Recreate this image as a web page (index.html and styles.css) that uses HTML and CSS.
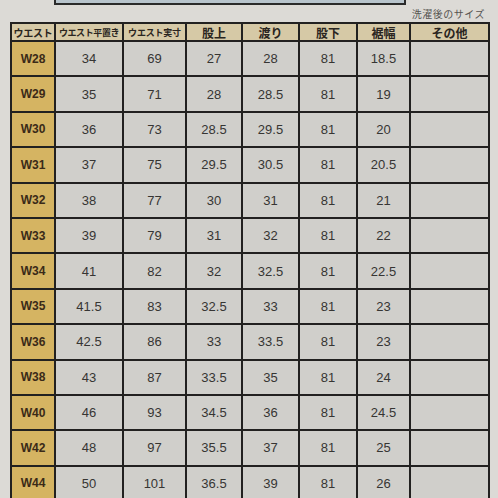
FILE: index.html
```html
<!DOCTYPE html>
<html lang="ja">
<head>
<meta charset="utf-8">
<link rel="stylesheet" href="styles.css">
</head>
<body>
<div class="page">
  <div class="topbox"></div>
  <div class="caption">洗濯後のサイズ</div>
  <div class="chart">
    <div class="hd h1">ウエスト</div>
    <div class="hd h2">ウエスト平置き</div>
    <div class="hd h3">ウエスト実寸</div>
    <div class="hd">股上</div>
    <div class="hd">渡り</div>
    <div class="hd">股下</div>
    <div class="hd">裾幅</div>
    <div class="hd">その他</div>

    <div class="sz">W28</div><div class="c">34</div><div class="c">69</div><div class="c">27</div><div class="c">28</div><div class="c">81</div><div class="c">18.5</div><div class="c"></div>
    <div class="sz">W29</div><div class="c">35</div><div class="c">71</div><div class="c">28</div><div class="c">28.5</div><div class="c">81</div><div class="c">19</div><div class="c"></div>
    <div class="sz">W30</div><div class="c">36</div><div class="c">73</div><div class="c">28.5</div><div class="c">29.5</div><div class="c">81</div><div class="c">20</div><div class="c"></div>
    <div class="sz">W31</div><div class="c">37</div><div class="c">75</div><div class="c">29.5</div><div class="c">30.5</div><div class="c">81</div><div class="c">20.5</div><div class="c"></div>
    <div class="sz">W32</div><div class="c">38</div><div class="c">77</div><div class="c">30</div><div class="c">31</div><div class="c">81</div><div class="c">21</div><div class="c"></div>
    <div class="sz">W33</div><div class="c">39</div><div class="c">79</div><div class="c">31</div><div class="c">32</div><div class="c">81</div><div class="c">22</div><div class="c"></div>
    <div class="sz">W34</div><div class="c">41</div><div class="c">82</div><div class="c">32</div><div class="c">32.5</div><div class="c">81</div><div class="c">22.5</div><div class="c"></div>
    <div class="sz">W35</div><div class="c">41.5</div><div class="c">83</div><div class="c">32.5</div><div class="c">33</div><div class="c">81</div><div class="c">23</div><div class="c"></div>
    <div class="sz">W36</div><div class="c">42.5</div><div class="c">86</div><div class="c">33</div><div class="c">33.5</div><div class="c">81</div><div class="c">23</div><div class="c"></div>
    <div class="sz">W38</div><div class="c">43</div><div class="c">87</div><div class="c">33.5</div><div class="c">35</div><div class="c">81</div><div class="c">24</div><div class="c"></div>
    <div class="sz">W40</div><div class="c">46</div><div class="c">93</div><div class="c">34.5</div><div class="c">36</div><div class="c">81</div><div class="c">24.5</div><div class="c"></div>
    <div class="sz">W42</div><div class="c">48</div><div class="c">97</div><div class="c">35.5</div><div class="c">37</div><div class="c">81</div><div class="c">25</div><div class="c"></div>
    <div class="sz">W44</div><div class="c">50</div><div class="c">101</div><div class="c">36.5</div><div class="c">39</div><div class="c">81</div><div class="c">26</div><div class="c"></div>
  </div>
</div>
</body>
</html>
```
FILE: styles.css
```css
html, body {
  margin: 0;
  padding: 0;
  background: #dcdad6;
  overflow: hidden;
}

.page {
  width: 498px;
  height: 498px;
  display: flex;
  flex-direction: column;
  font-family: "Liberation Sans", "Noto Sans CJK JP", sans-serif;
}

.topbox {
  flex: none;
  margin-left: 54px;
  width: 348px;
  height: 3px;
  background: #b8c4cc;
  border: 2px solid #2a2a2a;
  border-top: none;
}

.caption {
  flex: none;
  height: 17px;
  box-sizing: border-box;
  padding-right: 13px;
  text-align: right;
  font-family: "Noto Sans CJK JP", sans-serif;
  font-size: 10px;
  line-height: 15px;
  padding-top: 1px;
  color: #555350;
  letter-spacing: 0.5px;
}

.chart {
  flex: none;
  margin-left: 10px;
  width: 480px;
  box-sizing: border-box;
  padding: 2px;
  display: grid;
  grid-template-columns: 42px 66px 61px 54px 55px 56px 51px 77px;
  grid-template-rows: 16px repeat(13, 33.4px);
  gap: 2px;
  background: #222120;
}

.hd {
  background: #d6c9a6;
  display: flex;
  align-items: center;
  justify-content: center;
  font-family: "Noto Sans CJK JP", sans-serif;
  font-weight: 700;
  font-size: 12px;
  color: #2a2520;
  white-space: nowrap;
  overflow: hidden;
}

.h1 {
  font-size: 10px;
  letter-spacing: -0.3px;
}

.h2 {
  font-size: 9px;
  letter-spacing: -0.4px;
}

.h3 {
  font-size: 9px;
  letter-spacing: -0.2px;
}

.sz {
  background: #d5b462;
  display: flex;
  align-items: center;
  justify-content: center;
  font-weight: 700;
  font-size: 12px;
  color: #3a2a18;
}

.c {
  background: #d0cfcb;
  display: flex;
  align-items: center;
  justify-content: center;
  font-size: 13px;
  color: #363533;
}
```
